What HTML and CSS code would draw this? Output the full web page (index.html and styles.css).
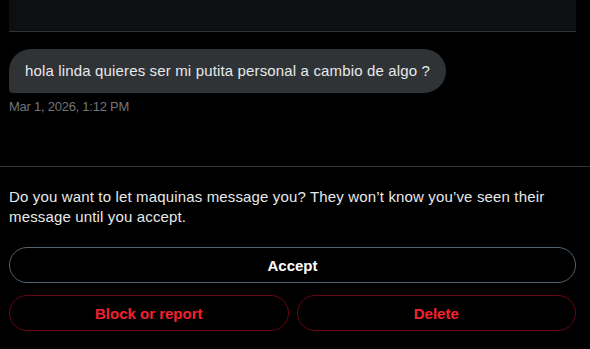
FILE: index.html
```html
<!DOCTYPE html>
<html>
<head>
<meta charset="utf-8">
<link rel="stylesheet" href="styles.css">
</head>
<body>
<div class="page">
  <div class="conversation">
    <div class="top-card"></div>
    <div class="bubble">hola linda quieres ser mi putita personal a cambio de algo ?</div>
    <div class="timestamp">Mar 1, 2026, 1:12 PM</div>
  </div>
  <div class="request">
    <p class="prompt">Do you want to let maquinas message you? They won’t know you’ve seen their message until you accept.</p>
    <button class="btn btn-accept">Accept</button>
    <div class="row">
      <button class="btn btn-danger">Block or report</button>
      <button class="btn btn-danger">Delete</button>
    </div>
  </div>
</div>
</body>
</html>
```
FILE: styles.css
```css
html, body {
  margin: 0;
  padding: 0;
  background: #000;
}
body {
  font-family: "Liberation Sans", Arial, sans-serif;
  color: #e7e9ea;
  width: 590px;
  height: 349px;
  overflow: hidden;
}
.conversation {
  padding: 0 14px 0 9px;
  height: 166px;
  border-bottom: 1px solid #2f3336;
}
.top-card {
  height: 31px;
  background: #0e0f11;
  border-bottom: 1px solid #2f3336;
}
.bubble {
  display: inline-block;
  margin-top: 17px;
  background: #2f3336;
  color: #e7e9ea;
  font-size: 15px;
  line-height: 20px;
  padding: 12px 16px;
  border-radius: 22px 22px 22px 4px;
  letter-spacing: 0.15px;
}
.timestamp {
  margin-top: 6px;
  font-size: 13px;
  line-height: 16px;
  color: #71767b;
  letter-spacing: -0.25px;
}
.request {
  padding: 20px 14px 0 9px;
}
.prompt {
  margin: 0 0 20px;
  font-size: 15px;
  line-height: 20px;
  color: #e7e9ea;
  letter-spacing: 0.15px;
}
.btn {
  display: flex;
  align-items: center;
  justify-content: center;
  box-sizing: border-box;
  height: 36px;
  border-radius: 18px;
  background: transparent;
  font-family: "Liberation Sans", Arial, sans-serif;
  font-weight: bold;
  font-size: 15px;
  padding: 0;
}
.btn-accept {
  width: 100%;
  border: 1px solid #536471;
  color: #fff;
}
.row {
  display: flex;
  gap: 8px;
  margin-top: 12px;
}
.btn-danger {
  flex: 1;
  border: 1px solid #67070f;
  color: #f4212e;
}
```
